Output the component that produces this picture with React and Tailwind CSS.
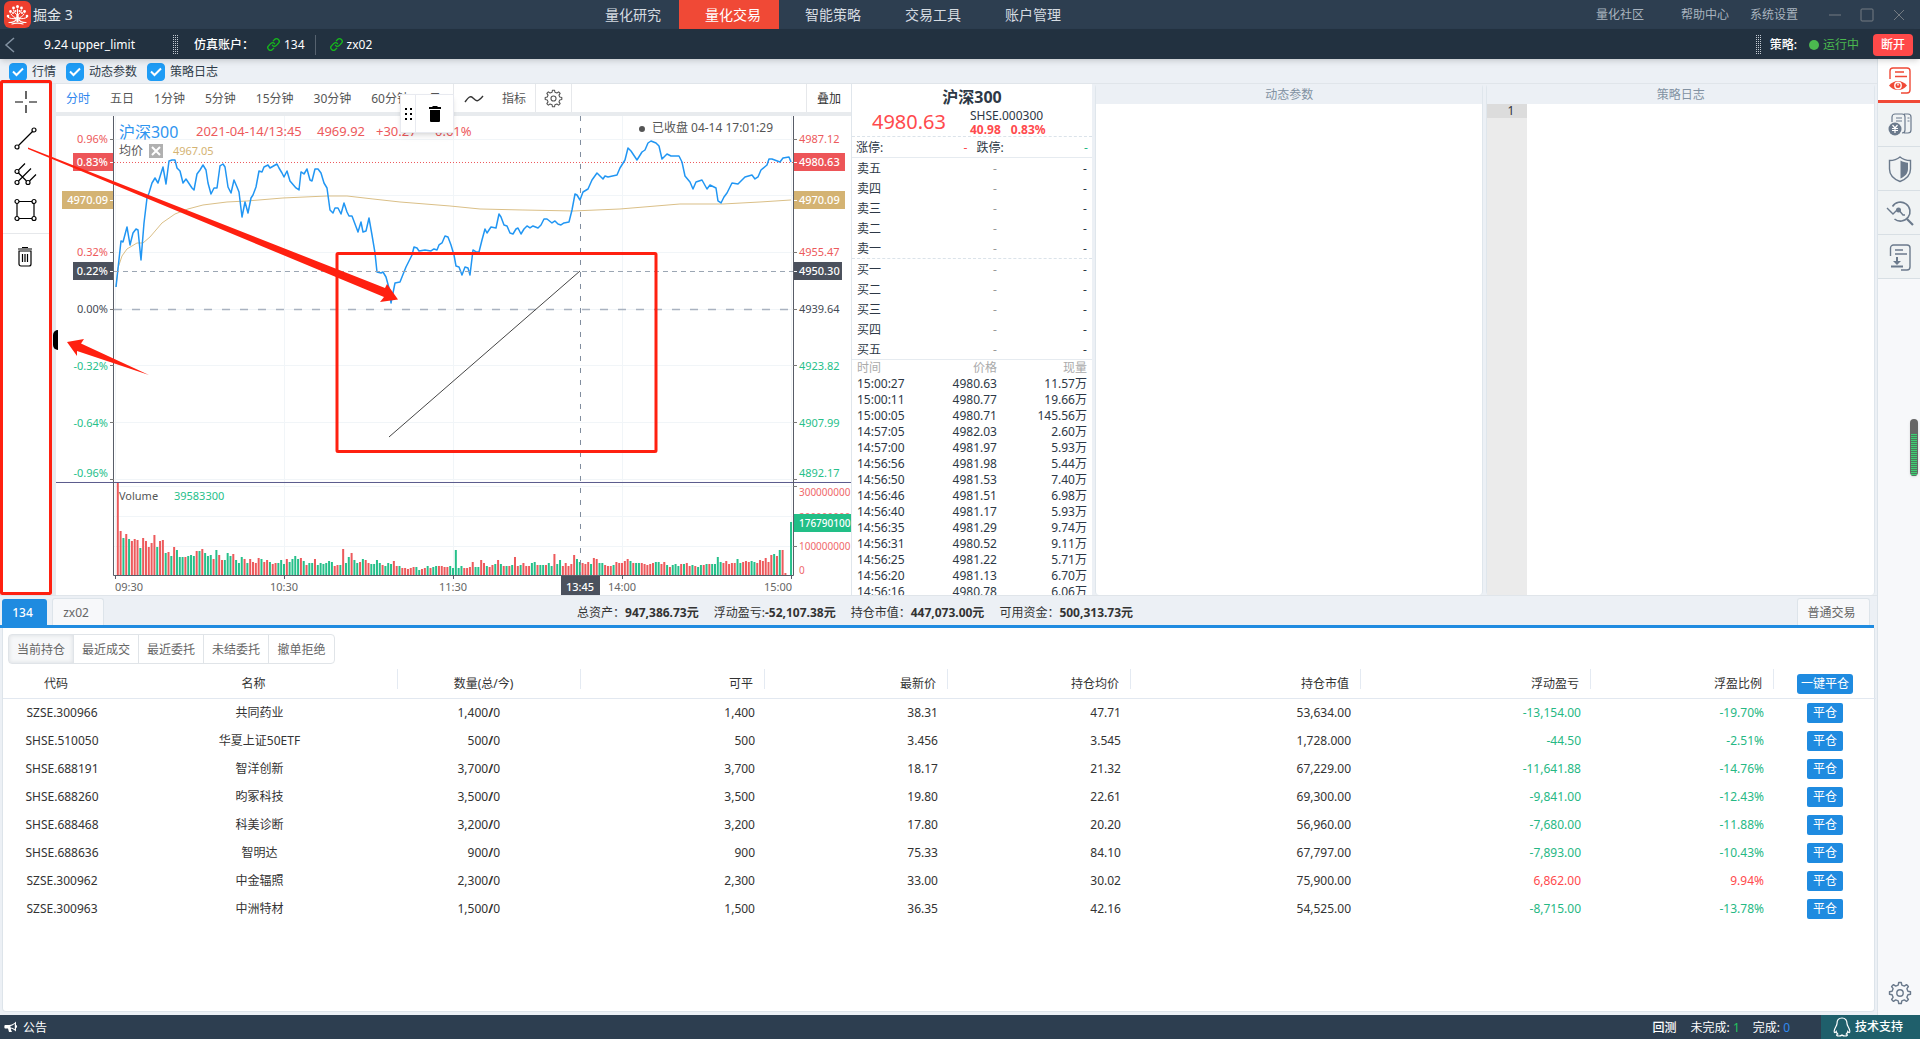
import React, { useState } from "react";

const UP = "#ed5a5c";
const DOWN = "#26c08a";

const NAV = ["量化研究", "量化交易", "智能策略", "交易工具", "账户管理"];
const HEADER_LINKS = ["量化社区", "帮助中心", "系统设置"];
const PERIODS = ["分时", "五日", "1分钟", "5分钟", "15分钟", "30分钟", "60分钟", "日"];
const ORDER_TABS = ["当前持仓", "最近成交", "最近委托", "未结委托", "撤单拒绝"];
const SELLS = ["卖五", "卖四", "卖三", "卖二", "卖一"];
const BUYS = ["买一", "买二", "买三", "买四", "买五"];

const TICKS = [
  ["15:00:27", "4980.63", "11.57万"],
  ["15:00:11", "4980.77", "19.66万"],
  ["15:00:05", "4980.71", "145.56万"],
  ["14:57:05", "4982.03", "2.60万"],
  ["14:57:00", "4981.97", "5.93万"],
  ["14:56:56", "4981.98", "5.44万"],
  ["14:56:50", "4981.53", "7.40万"],
  ["14:56:46", "4981.51", "6.98万"],
  ["14:56:40", "4981.17", "5.93万"],
  ["14:56:35", "4981.29", "9.74万"],
  ["14:56:31", "4980.52", "9.11万"],
  ["14:56:25", "4981.22", "5.71万"],
  ["14:56:20", "4981.13", "6.70万"],
  ["14:56:16", "4980.78", "6.06万"],
];

const SUMMARY = [
  ["总资产：", "947,386.73元"],
  ["浮动盈亏:", "-52,107.38元"],
  ["持仓市值：", "447,073.00元"],
  ["可用资金：", "500,313.73元"],
];

const POSITIONS = [
  ["SZSE.300966", "共同药业", "1,400", "1,400", "38.31", "47.71", "53,634.00", "-13,154.00", "-19.70%"],
  ["SHSE.510050", "华夏上证50ETF", "500", "500", "3.456", "3.545", "1,728.000", "-44.50", "-2.51%"],
  ["SHSE.688191", "智洋创新", "3,700", "3,700", "18.17", "21.32", "67,229.00", "-11,641.88", "-14.76%"],
  ["SHSE.688260", "昀冢科技", "3,500", "3,500", "19.80", "22.61", "69,300.00", "-9,841.00", "-12.43%"],
  ["SHSE.688468", "科美诊断", "3,200", "3,200", "17.80", "20.20", "56,960.00", "-7,680.00", "-11.88%"],
  ["SHSE.688636", "智明达", "900", "900", "75.33", "84.10", "67,797.00", "-7,893.00", "-10.43%"],
  ["SZSE.300962", "中金辐照", "2,300", "2,300", "33.00", "30.02", "75,900.00", "6,862.00", "9.94%"],
  ["SZSE.300963", "中洲特材", "1,500", "1,500", "36.35", "42.16", "54,525.00", "-8,715.00", "-13.78%"],
];

const PRICE_LINE =
  "60,171 65,125 67,126 71,111 74,129 77,117 80,113 82,114 85,144 88,107 91,82 93,77 96,67 99,62 102,67 107,51 110,68 113,45 116,44 119,44 121,52 124,55 127,67 130,63 136,72 138,74 141,58 144,54 147,49 150,54 152,67 155,78 158,72 161,72 164,50 167,48 169,51 172,71 175,77 178,64 181,71 183,76 186,101 189,86 192,97 195,82 197,79 200,71 203,55 206,56 208,51 212,49 214,52 221,48 223,52 226,57 228,61 231,55 234,65 240,72 243,74 245,56 248,58 251,53 254,64 256,65 259,53 262,53 265,57 268,67 271,72 274,94 277,97 279,92 282,92 285,98 288,87 291,96 293,100 296,100 302,116 305,106 307,116 310,115 313,102 316,119 319,137 321,156 325,157 327,156 330,161 333,172 335,187 339,167 344,166 350,151 356,139 358,131 361,132 363,135 369,134 375,135 378,133 381,134 383,129 386,127 389,120 392,121 395,129 398,139 400,150 403,151 406,159 409,151 412,152 414,159 417,134 420,136 423,136 426,124 429,113 431,117 435,111 440,112 443,98 445,101 448,109 451,110 454,117 457,118 460,113 462,112 465,118 468,113 471,110 474,112 477,110 482,112 485,109 488,103 491,103 496,107 499,105 502,108 505,109 508,107 513,106 516,94 519,78 521,79 524,84 527,76 532,73 536,64 541,57 544,60 547,63 549,60 552,61 561,59 564,52 569,44 572,32 575,35 581,44 586,36 589,34 592,27 595,25 600,27 603,30 606,43 611,38 615,40 623,40 626,46 629,60 634,66 637,73 640,66 646,64 651,73 654,69 660,72 662,85 665,87 668,81 671,77 676,67 682,68 689,61 696,59 699,63 702,61 705,54 711,49 713,43 716,43 724,46 727,42 733,41 735,46";

const AVG_LINE =
  "60,171 62,152 66,140 71,133 81,127 87,127 94,121 106,107 119,98 132,93 147,89 171,86 191,85 227,82 271,80 291,80 317,83 344,86 394,90 424,93 467,94 517,95 564,93 624,88 667,88 704,86 735,84";

// one entry per minute: direction + bar height
const VOLUMES =
  "R93 R44 G37 R41 G36 R34 R36 R35 G27 R37 R34 R28 R32 R40 G28 R34 R35 G22 R23 G19 R28 G25 G18 G18 R18 G19 G20 G19 R24 G24 R26 G22 G19 G20 R16 G25 R20 R15 G15 G22 G19 R21 G15 G12 G18 R16 G12 R16 R13 R12 R17 G16 R13 R15 G13 R11 R12 G12 G15 G11 R16 G13 G16 G19 G16 R17 G14 R10 G12 G12 R16 G10 G12 G11 G12 G14 G13 R9 R10 G10 R26 G12 G18 R22 G15 G12 R13 G16 R15 R12 G11 G11 G15 G12 R10 G9 G12 G11 R14 R9 G9 R7 R7 R6 R7 R8 G8 G5 R6 R7 G9 R7 G8 G9 R9 R9 R8 R8 G9 G7 G25 G7 G9 R7 R7 R8 R13 G8 G8 R15 R12 G9 R8 R10 G11 R15 G11 R9 G9 R9 G10 R18 R9 G10 R12 R9 R9 G12 G13 R10 G10 G10 R10 G12 G9 R21 G11 G15 R9 R12 R9 R11 R20 G16 G13 R12 R11 R13 G11 R17 R16 G12 G12 R10 R9 R9 G10 R13 R12 R12 R14 R16 G14 R12 G12 G12 R12 R11 R10 R11 R12 G13 G13 R11 R13 G10 R8 G10 G11 G9 R11 G11 R12 R9 G10 R9 G8 G10 R10 G11 R11 G11 G11 G18 G13 R12 R14 R11 R12 R12 G16 G12 R13 R14 R13 G14 G13 R12 R15 R14 R17 R13 R20 G21 R19 G25 R25 R2 R0 G53".split(
    " "
  );

const PRICE_TICKS = [
  [23, "0.96%", "4987.12", UP],
  [136, "0.32%", "4955.47", UP],
  [193, "0.00%", "4939.64", "#444a55"],
  [250, "-0.32%", "4923.82", DOWN],
  [307, "-0.64%", "4907.99", DOWN],
  [357, "-0.96%", "4892.17", DOWN],
];

const PRICE_TAGS = [
  [37, "0.83%", "4980.63", "#ed5558", 17, 51],
  [75, "4970.09", "4970.09", "#d4b373", 6, 51],
  [146, "0.22%", "4950.30", "#4b515d", 17, 48],
];

const Logo = () => (
  <svg viewBox="0 0 27 27" className="size-[27px]" fill="none" stroke="#fff" strokeLinecap="round">
    <rect width="27" height="27" rx="6" fill="#ee3f2e" stroke="none" />
    <path d="M5 21.500c3.500 0 6-.5 7-3M22 21.500c-3.500 0-6-.5-7-3M8 23c2-.8 3.500-.8 5.500-.8s3.500 0 5.500.8" strokeWidth="1.200" />
    <path d="M13.500 20v-6" strokeWidth="2.400" />
    <path d="M13.500 15V8M13.500 17c-3 0-5-1.500-6.500-4M13.500 17c3 0 5-1.500 6.500-4M13.500 14c-2-1-3.500-3-4-5M13.500 14c2-1 3.500-3 4-5M12 17.500c-3 .6-6 0-8-1.200M15 17.500c3 .6 6 0 8-1.200" />
    <g fill="#fff" stroke="none">
      <circle cx="13.500" cy="5.500" r="1.500" />
      <circle cx="9.500" cy="7" r="1.400" />
      <circle cx="17.500" cy="7" r="1.400" />
      <circle cx="6.500" cy="10.500" r="1.400" />
      <circle cx="20.500" cy="10.500" r="1.400" />
      <circle cx="4" cy="15" r="1.300" />
      <circle cx="23" cy="15" r="1.300" />
      <circle cx="11.500" cy="10" r="1" />
      <circle cx="15.500" cy="10" r="1" />
      <circle cx="9" cy="12" r="1" />
      <circle cx="18" cy="12" r="1" />
    </g>
  </svg>
);

const Grip = () => (
  <svg viewBox="0 0 6 20" className="h-5 w-[6px] shrink-0">
    {[0, 2, 4, 6, 8, 10, 12, 14, 16, 18].map((y) => (
      <path key={y} d={`M0 ${y + 0.5}h1m1 0h1m1 0h1`} stroke="#c3cad2" />
    ))}
  </svg>
);

const LinkIcon = () => (
  <svg viewBox="0 0 24 24" className="size-[13px]" fill="none" stroke="#16b81c" strokeWidth="2.400" strokeLinecap="round">
    <path d="M10 13.500a5 5 0 0 0 7 .5l4-4.200a4.900 4.900 0 0 0-7-7L11.500 5.300" />
    <path d="M14 10.500a5 5 0 0 0-7-.5l-4 4.200a4.900 4.900 0 0 0 7 7l2.500-2.500" />
  </svg>
);

const Gear = ({ className }) => (
  <svg viewBox="0 0 24 24" className={className} fill="none" stroke="currentColor" strokeWidth="1.400" strokeLinejoin="round">
    <circle cx="12" cy="12" r="3.200" />
    <path d="M10.200 4.100 10.700 1.500h2.600l.5 2.600 2.500 1 2.200-1.500 1.900 1.900-1.500 2.200 1 2.500 2.600.5v2.600l-2.600.5-1 2.500 1.500 2.200-1.900 1.900-2.200-1.500-2.500 1-.5 2.600h-2.600l-.5-2.600-2.500-1-2.200 1.500-1.900-1.900 1.500-2.200-1-2.500-2.600-.5v-2.600l2.600-.5 1-2.500-1.500-2.200 1.900-1.900 2.200 1.500z" />
  </svg>
);

const Header = () => (
  <header className="grid h-[29px] grid-cols-[579fr_500fr_841fr] bg-[#2d3e50]">
    <div className="flex items-center gap-[2px] pl-1 text-sm text-[#e3e7eb]">
      <Logo />
      <span>掘金 3</span>
    </div>
    <nav className="grid grid-cols-5">
      {NAV.map((item) => (
        <a
          key={item}
          href="#"
          className={`flex items-center justify-center pl-2 text-sm ${
            item === "量化交易" ? "bg-[#f04936] text-white" : "text-[#d5dbe1]"
          }`}
        >
          {item}
        </a>
      ))}
    </nav>
    <div className="flex items-center justify-end pr-[14px] text-xs text-[#a9b4bf]">
      <a href="#" className="mr-[37px]">{HEADER_LINKS[0]}</a>
      <a href="#" className="mr-[21px]">{HEADER_LINKS[1]}</a>
      <a href="#" className="mr-[30px]">{HEADER_LINKS[2]}</a>
      <div className="flex gap-[18px]">
        {["M1 7h12", "M2 1h10a1 1 0 0 1 1 1v10a1 1 0 0 1-1 1H2a1 1 0 0 1-1-1V2a1 1 0 0 1 1-1z", "M2 2l10 10M12 2 2 12"].map((d, i) => (
          <button key={d} type="button" aria-label={["最小化", "最大化", "关闭"][i]}>
            <svg viewBox="0 0 14 14" className="size-[14px]" fill="none" stroke="#747b82">
              <path d={d} />
            </svg>
          </button>
        ))}
      </div>
    </div>
  </header>
);

const StrategyBar = () => (
  <div className="z-10 flex h-[30px] items-center bg-[#223140] pt-px text-xs text-white shadow-md">
    <button type="button" aria-label="返回" className="ml-1">
      <svg viewBox="0 0 12 16" className="h-4 w-3" fill="none" stroke="#8493a3" strokeWidth="1.500">
        <path d="M10 1 2 8l8 7" />
      </svg>
    </button>
    <span className="ml-7 w-[129px]">9.24 upper_limit</span>
    <Grip />
    <span className="ml-[15px] w-[73px] font-medium">仿真账户：</span>
    <a href="#" className="flex h-5 items-center gap-1 border-r border-[#56626f] pr-[10px]">
      <LinkIcon />
      134
    </a>
    <a href="#" className="flex items-center gap-1 pl-[14px]">
      <LinkIcon />
      zx02
    </a>
    <div className="ml-auto flex items-center pr-[7px]">
      <Grip />
      <span className="ml-2 font-medium">策略:</span>
      <span className="ml-3 size-[10px] rounded-full bg-[#4bb84f]" />
      <span className="ml-1 text-[#4bb84f]">运行中</span>
      <button type="button" className="ml-[14px] h-[22px] w-10 rounded bg-[#ff4949] font-medium">
        断开
      </button>
    </div>
  </div>
);

const ViewToggles = () => (
  <div className="flex h-6 items-center gap-[10px] pt-px pl-[9px] text-xs text-[#2f3b48]">
    {["行情", "动态参数", "策略日志"].map((name) => (
      <label key={name} className="flex items-center gap-[5px]">
        <span className="relative size-[18px]">
          <input type="checkbox" defaultChecked className="peer block size-[18px] appearance-none rounded border border-[#1e9cf5] bg-white checked:bg-[#1e9cf5]" />
          <svg viewBox="0 0 18 18" className="pointer-events-none absolute inset-0 hidden peer-checked:block" fill="none" stroke="#fff" strokeWidth="2">
            <path d="m4 8.500 3.500 3.500L14 5.500" />
          </svg>
        </span>
        {name}
      </label>
    ))}
  </div>
);

const DrawButton = ({ label, children }) => (
  <button type="button" aria-label={label} className="flex h-9 w-full items-center justify-center">
    <svg viewBox="0 0 24 24" className="size-6" fill="none" stroke="currentColor" strokeWidth="1.200">
      {children}
    </svg>
  </button>
);

const DrawTools = () => (
  <aside className="flex w-[52px] flex-col border-l-2 border-[#e4e9ee] bg-white pr-[2px] text-black">
    <div className="flex flex-col border-b border-[#e6e8eb] pb-[5px]">
      <DrawButton label="十字光标">
        <path d="M12 1v8M12 15v8M1 12h8M15 12h8" />
      </DrawButton>
      <DrawButton label="线段">
        <circle cx="3" cy="21" r="2" />
        <circle cx="20" cy="4" r="2" />
        <path d="M4.500 19.500 18.500 5.500" />
      </DrawButton>
      <DrawButton label="平行线">
        <circle cx="3" cy="9.500" r="2" />
        <circle cx="3" cy="20.500" r="2" />
        <circle cx="14" cy="20.500" r="2" />
        <path d="M4.500 8 11 1.500M4.500 19 17 6.500M15.500 19 22 12.500M4.500 11l8 8" />
      </DrawButton>
      <DrawButton label="矩形">
        <circle cx="3" cy="3.500" r="2" />
        <circle cx="20" cy="3.500" r="2" />
        <circle cx="3" cy="20.500" r="2" />
        <circle cx="20" cy="20.500" r="2" />
        <path d="M5 3.500h13M5 20.500h13M3 5.500v13M20 5.500v13" />
      </DrawButton>
    </div>
    <div className="pt-[5px]">
      <DrawButton label="清空画线">
        <path d="M4 4h14M8 2.500h6M5 6h12v13a2 2 0 0 1-2 2H7a2 2 0 0 1-2-2zM8.500 9v8M11 9v8M13.500 9v8" />
      </DrawButton>
    </div>
  </aside>
);

const ChartToolbar = () => {
  const [period, setPeriod] = useState("分时");
  return (
    <div className="flex h-8 items-stretch border-b-4 border-[#e8ebee] text-xs text-[#555]">
      <div className="flex border-r border-[#e6e8eb] pr-[2px]">
        {PERIODS.map((p) => (
          <button
            key={p}
            type="button"
            onClick={() => setPeriod(p)}
            className={`px-[10px] pt-[2px] ${p === period ? "text-[#2e86ee]" : ""}`}
          >
            {p}
          </button>
        ))}
      </div>
      <button type="button" aria-label="走势图" className="ml-[10px] pt-px">
        <svg viewBox="0 0 20 10" className="h-[10px] w-5" fill="none" stroke="#333" strokeWidth="1.400">
          <path d="M1 8C4 4 6 1 9 4s4 5 10-2" />
        </svg>
      </button>
      <button type="button" className="border-r border-[#e6e8eb] pt-[2px] pr-[9px] pl-[18px]">指标</button>
      <button type="button" aria-label="设置" className="flex w-9 items-center justify-center border-r border-[#e6e8eb] text-[#555]">
        <Gear className="size-[19px]" />
      </button>
      <button type="button" className="ml-auto border-l border-[#e6e8eb] px-[10px] pt-[2px] text-[#333]">叠加</button>
    </div>
  );
};

const Chart = () => (
  <svg
    viewBox="0 0 795 479"
    preserveAspectRatio="xMinYMin meet"
    className="block h-full w-full bg-white text-[11px]"
    fill="none"
    dominantBaseline="central"
  >
    <g stroke="#f1f5f8">
      {[23.5, 79.5, 136.5, 193.5, 249.5, 306.5, 363.5, 370.5, 400.5, 430.5].map((y) => (
        <path key={y} d={`M58 ${y}H737`} />
      ))}
      {[59.5, 228.5, 397.5, 566.5, 735.5].map((x) => (
        <path key={x} d={`M${x} 0V459`} />
      ))}
    </g>

    {VOLUMES.map((v, i) => {
      const h = Number(v.slice(1));
      return (
        <rect key={i} x={60.8 + i * 2.817} y={459 - h} width="2" height={h} fill={v[0] === "R" ? UP : DOWN} />
      );
    })}

    <path d="M58 193.500H737" stroke="#a9b2c0" strokeDasharray="8 10" strokeWidth="1.500" />
    <path d="M58 46.500H737" stroke="#ed5558" strokeDasharray="1 2" />
    <polyline points={AVG_LINE} stroke="#dabf87" />
    <polyline points={PRICE_LINE} stroke="#2196f3" strokeWidth="1.500" strokeLinejoin="round" />
    <path d="M58 155.500H737" stroke="#9aa5b3" strokeDasharray="5 4" />
    <path d="M524.500 0V459" stroke="#7f8c9d" strokeDasharray="5 7" />
    <path d="M333 321 524 155" stroke="#444" />

    <path d="M0 366.500H795" stroke="#5a5a8c" />
    <path d="M57.500 0V459.500H737.500V0" stroke="#555b66" />
    <path d="M59.500 460v3M228.500 460v3M397.500 460v3M566.500 460v3M735.500 460v3" stroke="#555b66" />
    {[23.5, 136.5, 193.5, 249.5, 306.5, 363.5].map((y) => (
      <path key={y} d={`M54 ${y}h4M737 ${y}h4`} stroke="#777" />
    ))}
    <path d="M737 370.500h4M737 430.500h4" stroke="#777" />

    {PRICE_TICKS.map(([y, pct, price, color]) => (
      <g key={pct} fill={color}>
        <text x="52" y={y} textAnchor="end">{pct}</text>
        <text x="743" y={y}>{price}</text>
      </g>
    ))}
    {PRICE_TAGS.map(([y, left, right, color, x, width]) => (
      <g key={y} fill="#fff" fontWeight="500">
        <rect x={x} y={y} width={57 - x} height="18" fill={color} />
        <rect x="738" y={y} width={width} height="18" fill={color} />
        <path d={`M54 ${y + 9.5}h3M738 ${y + 9.5}h3`} stroke="#fff" />
        <text x="52" y={y + 9} textAnchor="end">{left}</text>
        <text x="743" y={y + 9}>{right}</text>
      </g>
    ))}

    <g fill="#f0696b" fontSize="10">
      <text x="743" y="376">300000000</text>
      <text x="743" y="401">200000000</text>
      <text x="743" y="430">100000000</text>
      <text x="743" y="454">0</text>
      <rect x="738" y="398" width="57" height="18" fill="#22bf87" />
      <text x="743" y="407" fill="#fff" fontWeight="500">176790100</text>
    </g>

    <g fill="#666">
      <text x="59" y="471">09:30</text>
      <text x="228" y="471" textAnchor="middle">10:30</text>
      <text x="397" y="471" textAnchor="middle">11:30</text>
      <text x="566" y="471" textAnchor="middle">14:00</text>
      <text x="736" y="471" textAnchor="end">15:00</text>
    </g>
    <rect x="505" y="460" width="39" height="19" fill="#4b515d" />
    <text x="524" y="471" fill="#fff" fontWeight="500" textAnchor="middle">13:45</text>

    <text x="63" y="16" fontSize="16" fill="#2f95f0">沪深300</text>
    <g fill={UP} fontSize="13">
      <text x="140" y="15">2021-04-14/13:45</text>
      <text x="261" y="15">4969.92</text>
      <text x="320" y="15">+30.27</text>
      <text x="379" y="15">0.61%</text>
    </g>
    <text x="63" y="35" fontSize="12" fill="#555">均价</text>
    <rect x="93" y="28" width="14" height="14" fill="#b0b0b0" />
    <path d="m96 31 8 8m0-8-8 8" stroke="#fff" strokeWidth="2" />
    <text x="117" y="35" fill="#d4b373">4967.05</text>
    <circle cx="586" cy="13" r="3" fill="#555" />
    <text x="596" y="12" fontSize="12" fill="#555">已收盘 04-14 17:01:29</text>
    <text x="63" y="380" fill="#555">Volume</text>
    <text x="118" y="380" fill={DOWN}>39583300</text>
  </svg>
);

// floating tools of the selected line
const LinePopup = () => (
  <div className="absolute top-[10px] left-[344px] flex h-[39px] w-[54px] border border-[#e8eaf0] bg-white shadow-md">
    <div className="flex w-[15px] items-center justify-center border-r border-[#e8eaf0]">
      <svg viewBox="0 0 7 12" className="h-3 w-[7px]">
        <path d="M0 0h2v2H0zM5 0h2v2H5zM0 5h2v2H0zM5 5h2v2H5zM0 10h2v2H0zM5 10h2v2H5z" />
      </svg>
    </div>
    <button type="button" aria-label="删除" className="flex flex-1 items-center justify-center">
      <svg viewBox="0 0 12 16" className="h-4 w-3">
        <path d="M0 1h3.500V0h5v1H12v2H0zM1 4h10v11a1 1 0 0 1-1 1H2a1 1 0 0 1-1-1z" />
      </svg>
    </button>
  </div>
);

const Annotations = () => (
  <svg viewBox="0 0 660 512" className="pointer-events-none absolute top-0 left-0 h-[512px] w-[660px] overflow-visible" fill="#ff2010">
    <rect x="1.500" y="-2.500" width="49" height="512" rx="1" fill="none" stroke="#ff2010" strokeWidth="3" />
    <rect x="337" y="169.500" width="319" height="198" rx="1" fill="none" stroke="#ff2010" strokeWidth="3" />
    <path d="M28 63.500 385 204l2-4 11 15.500-18 2.500 4-5L28 65z" />
    <path d="m67 258 17-3-3 4.500 68 31.500-72-24v5z" />
  </svg>
);

const QuoteRow = ({ name }) => (
  <div className="grid h-5 grid-cols-[1fr_80px_90px] items-center px-[5px] pt-px">
    <span>{name}</span>
    <span className="text-right text-[#999]">-</span>
    <span className="text-right">-</span>
  </div>
);

const QuotePanel = () => (
  <section className="flex w-[241px] shrink-0 flex-col overflow-hidden border-l border-[#e0e6ec] bg-white text-xs text-[#2d3846]">
    <h2 className="h-[25px] text-center text-base leading-[26px] font-bold">沪深300</h2>
    <div className="flex h-7 gap-6 border-b border-dashed border-[#dbe3ea] pl-5">
      <span className="text-xl leading-[26px] text-[#ff4a4d]">4980.63</span>
      <div className="leading-[14px]">
        <div>SHSE.000300</div>
        <div className="flex gap-[10px] font-bold text-[#ff4a4d]">
          <span>40.98</span>
          <span>0.83%</span>
        </div>
      </div>
    </div>
    <div className="grid h-[21px] shrink-0 grid-cols-2 items-center gap-[9px] border-b border-[#e6ebf0] px-1 pt-px">
      <span className="flex justify-between">涨停:<i className="text-[#ff4a4d] not-italic">-</i></span>
      <span className="flex justify-between">跌停:<i className="text-[#26b884] not-italic">-</i></span>
    </div>
    <div className="border-b border-dashed border-[#dbe3ea]">
      {SELLS.map((s) => <QuoteRow key={s} name={s} />)}
    </div>
    <div className="border-b border-[#e6ebf0]">
      {BUYS.map((b) => <QuoteRow key={b} name={b} />)}
    </div>
    <table className="w-full table-fixed">
      <thead>
        <tr className="h-4 leading-4 text-[#aaa]">
          <th className="pl-[5px] text-left font-normal">时间</th>
          <th className="w-[80px] text-right font-normal">价格</th>
          <th className="w-[95px] pr-[5px] text-right font-normal">现量</th>
        </tr>
      </thead>
      <tbody>
        {TICKS.map(([time, price, volume]) => (
          <tr key={time} className="h-4 leading-4">
            <td className="pl-[5px]">{time}</td>
            <td className="text-right">{price}</td>
            <td className="pr-[5px] text-right">{volume}</td>
          </tr>
        ))}
      </tbody>
    </table>
  </section>
);

const AccountBar = () => (
  <div className="mr-[3px] flex h-8 items-end border-b-3 border-[#1f8be0] pl-[2px] text-xs text-[#666]">
    <button type="button" className="h-[26px] w-[45px] rounded-t-[3px] bg-[#1f8be0] pt-px pr-1 font-medium text-white">134</button>
    <button type="button" className="ml-[5px] h-[27px] w-[52px] rounded-t-[3px] border border-b-0 border-[#dde4ea] bg-[#f7f8fa] pt-px pr-1">zx02</button>
    <div className="ml-[473px] flex h-6 items-center gap-[15px] text-[#333]">
      {SUMMARY.map(([name, value]) => (
        <span key={name}>
          {name}
          <b>{value}</b>
        </span>
      ))}
    </div>
    <button type="button" className="mr-1 ml-auto h-[27px] w-[73px] rounded-t-[3px] border border-b-0 border-[#dde4ea] bg-[#f7f8fa] pt-px pr-1">
      普通交易
    </button>
  </div>
);

const Positions = () => {
  const [tab, setTab] = useState("当前持仓");
  return (
    <section className="mr-[2px] mb-[3px] ml-[2px] flex-1 rounded-b border border-t-0 border-[#dde4ea] bg-white text-xs text-[#333]">
      <div className="mt-[6px] ml-[5px] inline-flex h-[30px] rounded border border-[#e0e4e8] align-top">
        {ORDER_TABS.map((t) => (
          <button
            key={t}
            type="button"
            onClick={() => setTab(t)}
            className={`w-[65px] border-r border-[#e0e4e8] pt-[2px] text-[#666] last:border-r-0 ${
              t === tab ? "bg-[#f6f7f9] shadow-[inset_0_0_4px_#d8dce0]" : ""
            }`}
          >
            {t}
          </button>
        ))}
      </div>
      <table className="mt-[2px] w-full table-fixed">
        <colgroup>
          <col className="w-[118px]" />
          <col className="w-[277px]" />
          <col className="w-[183px]" />
          <col className="w-[184px]" />
          <col className="w-[183px]" />
          <col className="w-[183px]" />
          <col className="w-[230px]" />
          <col className="w-[230px]" />
          <col className="w-[183px]" />
          <col className="w-[102px]" />
        </colgroup>
        <thead>
          <tr className="h-8 border-b border-[#e2e8f0] align-top">
            <th className="p-0 pt-1 pr-3 leading-7 font-normal">代码</th>
            {["名称", "数量(总/今)"].map((name) => (
              <th key={name} className="p-0 font-normal">
                <div className="mt-[3px] h-5 border-r border-[#e4eaf2] pr-[11px] leading-[30px]">{name}</div>
              </th>
            ))}
            {["可平", "最新价", "持仓均价", "持仓市值", "浮动盈亏", "浮盈比例"].map((name) => (
              <th key={name} className="p-0 font-normal">
                <div className="mt-[3px] h-5 border-r border-[#e4eaf2] pr-[11px] text-right leading-[30px]">{name}</div>
              </th>
            ))}
            <th className="p-0 pt-2 font-normal">
              <button type="button" className="mx-auto block h-5 w-14 rounded-[3px] bg-[#1f8be0] text-white">一键平仓</button>
            </th>
          </tr>
        </thead>
        <tbody>
          {POSITIONS.map(([code, name, total, ...rest]) => (
            <tr key={code} className="h-7">
              <td className="text-center">{code}</td>
              <td className="text-center">{name}</td>
              <td className="pr-[81px] text-right">{total}<b>/</b>0</td>
              {rest.map((value, i) => (
                <td
                  key={i}
                  className={`pr-[10px] text-right ${
                    i < 4 ? "" : value.startsWith("-") ? "text-[#26b884]" : "text-[#ff4a4d]"
                  }`}
                >
                  {value}
                </td>
              ))}
              <td>
                <button type="button" className="mx-auto block h-5 w-9 rounded-[2px] bg-[#1f8be0] text-white">平仓</button>
              </td>
            </tr>
          ))}
        </tbody>
      </table>
    </section>
  );
};

const SideButton = ({ label, active, children }) => (
  <button
    type="button"
    aria-label={label}
    className={`flex h-11 w-full items-center justify-center pl-[2px] ${
      active ? "border-b-3 border-[#f04936] bg-white text-[#f04936]" : "border-b border-[#d8dfe4] bg-[#f0f3f4] text-[#6b7a8c]"
    }`}
  >
    <svg viewBox="0 0 28 28" className="size-7" fill="none" stroke="currentColor" strokeWidth="1.400">
      {children}
    </svg>
  </button>
);

const SideBar = () => (
  <aside className="relative flex w-[43px] shrink-0 flex-col items-center border-l border-[#dde4ea] bg-[#f7f8fa] text-[#6b7a8c]">
    <SideButton label="策略监控" active>
      <path d="M4 13V5a3 3 0 0 1 3-3h14a3 3 0 0 1 3 3v19a3 3 0 0 1-3 3h-6M9 6h9M9 10.500h12" />
      <path d="M3 19.500c5-6 13-6 18 0-5 6-13 6-18 0z" fill="currentColor" stroke="none" />
      <circle cx="12" cy="19.500" r="3.200" stroke="#fff" />
      <path d="M12 17.500v2" stroke="#fff" />
    </SideButton>
    <SideButton label="交易账户">
      <path d="M6 11V6a3 3 0 0 1 3-3h7a3 3 0 0 1 3 3v13a3 3 0 0 1-3 3M18 3h4a3 3 0 0 1 3 3v13a3 3 0 0 1-3 3h-4M10 7h6M10 10h6M21.500 7h2M21.500 10h2" strokeWidth="1.200" />
      <circle cx="9" cy="18" r="6.500" fill="currentColor" stroke="none" />
      <path d="m6.500 14 2.500 3 2.500-3M9 17v5M6 17.500h6M6 19.500h6" stroke="#fff" strokeWidth="1.200" />
    </SideButton>
    <SideButton label="风控">
      <path d="M14 2c3 2.500 6.500 3.500 10.500 3.500V14c0 6-4 10-10.500 12.500C7.500 24 3.500 20 3.500 14V5.500C7.500 5.500 11 4.500 14 2z" />
      <path d="M14.500 5.500c2.500 1.500 5 2 7.500 2.200V14c0 4.500-3 7.500-7.500 9.500z" fill="currentColor" stroke="none" />
    </SideButton>
    <SideButton label="绩效分析">
      <path d="m1 9 6 6 5-5 5 6h2" />
      <path d="M6.500 7.500a9.500 9.500 0 1 1 2 12.500" strokeWidth="1.600" />
      <circle cx="12.500" cy="11" r="2.500" fill="currentColor" stroke="none" />
      <path d="m21 20 6 6" strokeWidth="2.200" />
    </SideButton>
    <SideButton label="导出">
      <path d="M4.500 13V5a3 3 0 0 1 3-3H21a3 3 0 0 1 3 3v19a3 3 0 0 1-3 3h-6M9 7h8M9 11h12" />
      <path d="M11 14v6M5 23.500h12" strokeWidth="2" />
      <path d="M7 18h8l-4 4z" fill="currentColor" stroke="none" />
    </SideButton>
    <div className="absolute top-[360px] right-[2px] h-[57px] w-2 overflow-hidden rounded-full bg-[#666] pt-[15px] shadow">
      <div className="mx-px h-full bg-[repeating-linear-gradient(#3ecf74_0_1px,#4c7a5c_1px_2px)]" />
    </div>
    <button type="button" aria-label="设置" className="mt-auto mb-[10px] pl-[2px]">
      <Gear className="size-6" />
    </button>
  </aside>
);

const Footer = () => (
  <footer className="flex h-6 items-center bg-[#2d3e50] text-xs text-white">
    <svg viewBox="0 0 14 12" className="ml-1 h-3 w-[14px]" fill="#fff">
      <path fillRule="evenodd" d="M1 4h4c3 0 5-1.500 7-3.500V4c1.500.3 1.500 2.700 0 3v3.500C10.500 9 9 8 7 7.500c-.5 1.500.5 2 1 3.500H5L4 7.500H1c-.8 0-.8-3.500 0-3.500zM6.500 5v1.500c1.500.2 3 .8 4.300 1.800V2.800C9.500 4 8 4.800 6.500 5z" />
    </svg>
    <a href="#" className="ml-[5px] pt-px">公告</a>
    <span className="ml-auto pt-px font-medium">回测</span>
    <span className="ml-[14px] pt-px">未完成: <span className="text-[#22c55e]">1</span></span>
    <span className="ml-[13px] pt-px">完成: <span className="text-[#2f8bf0]">0</span></span>
    <a href="#" className="ml-[31px] flex h-full w-[99px] items-center gap-1 bg-[#1f5f6b] pl-3 font-medium">
      <svg viewBox="0 0 18 20" className="h-5 w-[18px]" fill="none" stroke="#fff" strokeWidth="1.200">
        <path d="M9 1C5.500 1 4 3.500 4 6.500 4 9 1.500 11 1.200 14c-.2 2 1 2 2 .5.300 1 .8 1.800 1.500 2.500-2 1-1 2 1.300 2 1.500 0 2.500-.5 3-1 .5.500 1.500 1 3 1 2.300 0 3.300-1 1.300-2 .7-.7 1.200-1.500 1.500-2.500 1 1.500 2.200 1.500 2-.5-.3-3-2.800-5-2.800-7.500C14 3.500 12.500 1 9 1z" />
      </svg>
      技术支持
    </a>
  </footer>
);

const App = () => {
  return (
    <div className="flex min-h-screen flex-col bg-[#ecf0f5] font-['Noto_Sans','Noto_Sans_CJK_SC',sans-serif]">
      <Header />
      <StrategyBar />
      <div className="flex flex-1">
        <main className="flex min-w-0 flex-1 flex-col">
          <ViewToggles />
          <div className="relative flex h-[513px] border-y border-[#e0e5ea]">
            <DrawTools />
            <div className="relative w-1 shrink-0 bg-[#e8ebee]">
              <button type="button" aria-label="收起" className="absolute top-[246px] left-px z-10 h-5 w-[5px] rounded-l-full bg-black" />
            </div>
            <div className="relative flex min-w-0 flex-[796] flex-col bg-white">
              <ChartToolbar />
              <div className="min-h-0 flex-1">
                <Chart />
              </div>
              <LinePopup />
            </div>
            <QuotePanel />
            <section className="ml-[3px] flex-[387] rounded border-x border-[#dfe6ec] bg-white">
              <h3 className="h-5 bg-[#ecf0f5] text-center text-xs leading-[22px] text-[#8292a2]">动态参数</h3>
            </section>
            <section className="mr-[2px] ml-[3px] flex flex-[387] flex-col rounded border-x border-[#dfe6ec] bg-white">
              <h3 className="h-5 bg-[#ecf0f5] text-center text-xs leading-[22px] text-[#8292a2]">策略日志</h3>
              <div className="w-10 flex-1 bg-[#ebebeb]">
                <div className="h-[14px] bg-[#dcdcdc] pr-[13px] text-right text-xs leading-[14px] text-[#333]">1</div>
              </div>
            </section>
            <Annotations />
          </div>
          <AccountBar />
          <Positions />
        </main>
        <SideBar />
      </div>
      <Footer />
    </div>
  );
};

export default App;
